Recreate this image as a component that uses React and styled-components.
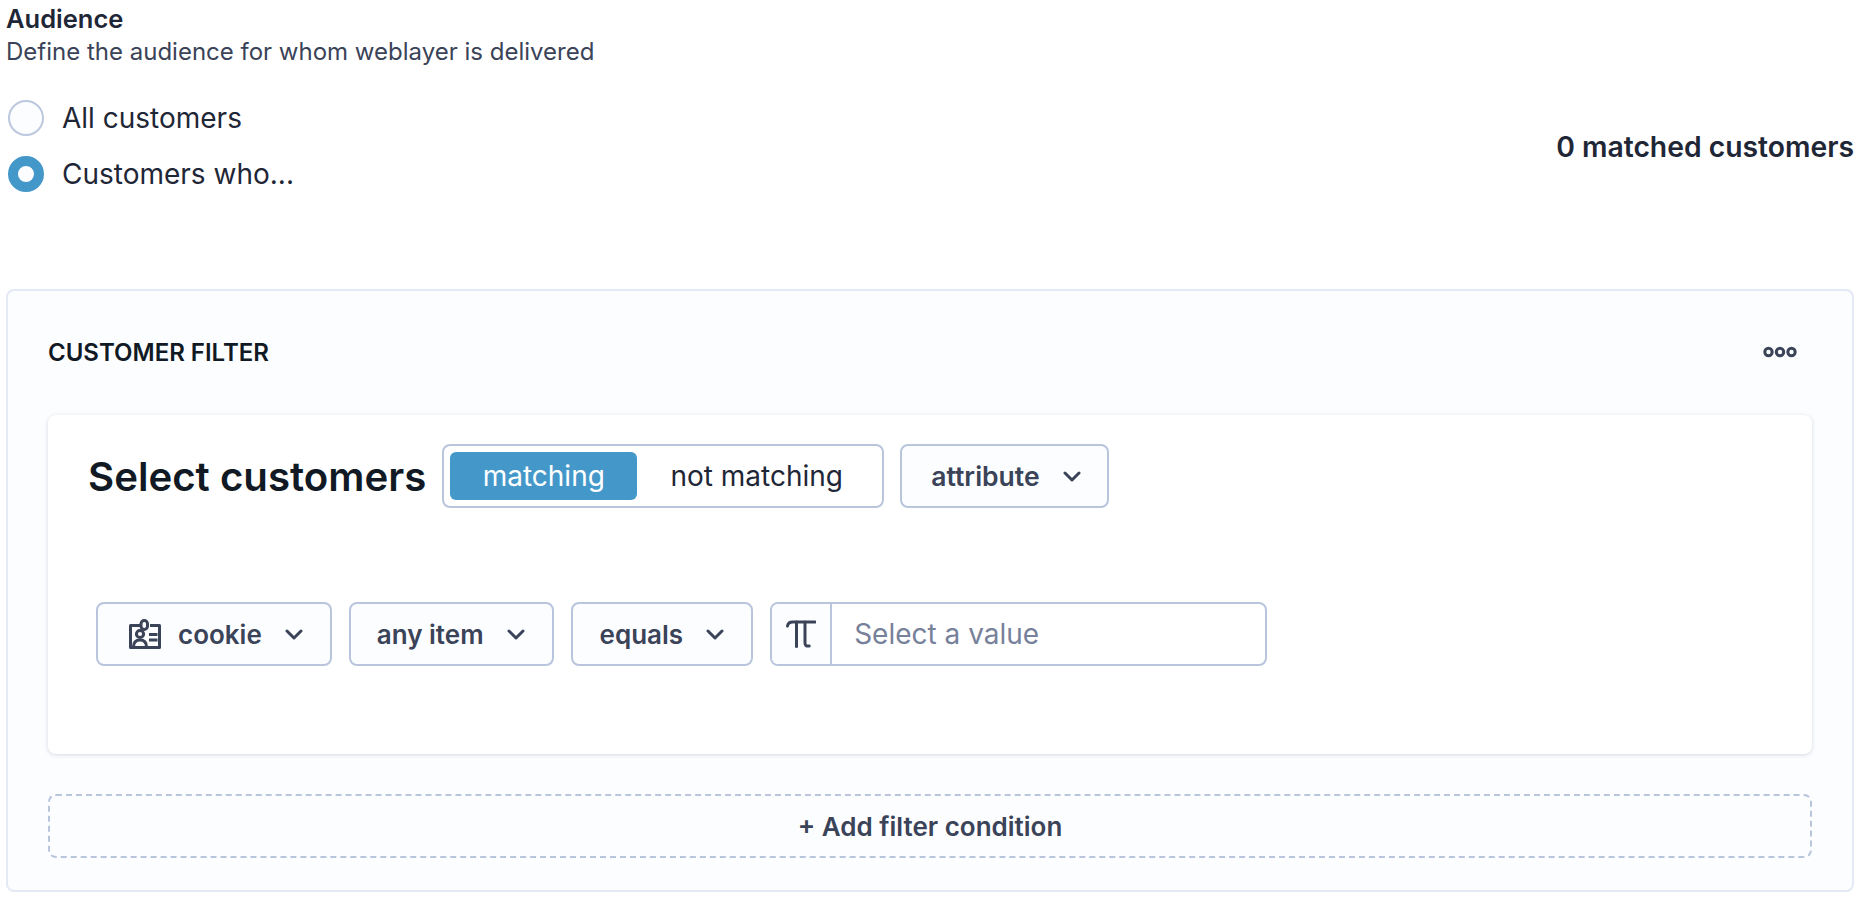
import styled, {createGlobalStyle} from "styled-components";

const GlobalStyle = createGlobalStyle`
  html, body {
    margin: 0;
    padding: 0;
    background: #fff;
    font-family: Inter, "Liberation Sans", sans-serif;
    color: #1f2937;
  }
  * {
    box-sizing: border-box;
  }
`;

const Page = styled.div`
  width: 1868px;
  height: 904px;
  padding: 5px 14px 0 6px;
  overflow: hidden;
`;

const Title = styled.h3`
  margin: 0;
  font-size: 25.5px;
  line-height: 27px;
  font-weight: 600;
  color: #1f2737;
`;

const Description = styled.p`
  margin: 6px 0 0;
  font-size: 24px;
  line-height: 27px;
  font-weight: 400;
  color: #3a4358;
`;

const AudienceRow = styled.div`
  display: flex;
  align-items: center;
  justify-content: space-between;
  margin-top: 35px;
`;

const Radios = styled.div`
  display: flex;
  flex-direction: column;
  gap: 20px;
  padding-left: 2px;
`;

const RadioRow = styled.label`
  display: flex;
  align-items: center;
  gap: 18px;
  height: 36px;
  font-size: 28px;
  color: #1f2737;
`;

const RadioDot = styled.span`
  width: 36px;
  height: 36px;
  border-radius: 50%;
  background: #fcfdff;
  border: ${(p) => (p.$checked ? "10px solid #4498c9" : "2px solid #bcc8de")};
`;

const Matched = styled.div`
  padding-top: 2px;
  font-size: 28.3px;
  font-weight: 600;
  color: #1f2737;
`;

const Panel = styled.section`
  margin-top: 97px;
  height: 603px;
  padding: 0 40px;
  border: 2px solid #e3e9f5;
  border-radius: 8px;
  background: #fcfdff;
`;

const PanelHead = styled.div`
  display: flex;
  align-items: center;
  justify-content: space-between;
  height: 124px;
  padding: 0 15px 2px 0;
  font-size: 24px;
  font-weight: 600;
  color: #111a24;
`;

const Card = styled.div`
  height: 339px;
  padding: 29px 40px 0;
  background: #fff;
  border-radius: 8px;
  box-shadow: 0 1px 4px rgba(60, 75, 110, 0.2);
`;

const CardHead = styled.div`
  display: flex;
  align-items: center;
  gap: 16px;
`;

const Heading = styled.h2`
  margin: 0;
  font-size: 40.2px;
  font-weight: 600;
  color: #111a24;
`;

const Toggle = styled.div`
  display: flex;
  width: 442px;
  height: 64px;
  padding: 6px;
  background: #fff;
  border: 2px solid #b9c5dc;
  border-radius: 8px;
`;

const ToggleOption = styled.div`
  display: flex;
  align-items: center;
  justify-content: center;
  flex: ${(p) => (p.$active ? "0 0 187px" : "1")};
  border-radius: 6px;
  font-size: 28px;
  color: ${(p) => (p.$active ? "#fff" : "#1f2737")};
  background: ${(p) => (p.$active ? "#4498c9" : "transparent")};
`;

const Conditions = styled.div`
  display: flex;
  gap: 17px;
  margin: 94px 0 0 8px;
`;

const Select = styled.button`
  display: flex;
  align-items: center;
  gap: 23px;
  height: 64px;
  padding: 0 ${(p) => p.$right || 27}px 0 ${(p) => p.$left || 27}px;
  background: #fcfdff;
  border: 2px solid #b9c5dc;
  border-radius: 8px;
  font-family: inherit;
  font-size: ${(p) => p.$size || 26}px;
  font-weight: 600;
  color: #3a4358;
`;

const SelectIcon = styled.span`
  display: flex;
  margin-right: -6px;
`;

const ValueField = styled.div`
  display: flex;
  width: 497px;
  height: 64px;
  background: #fff;
  border: 2px solid #b9c5dc;
  border-radius: 8px;
  overflow: hidden;
`;

const TypeBox = styled.div`
  display: flex;
  align-items: center;
  justify-content: center;
  width: 60px;
  background: #fcfdff;
  border-right: 2px solid #b9c5dc;
`;

const Placeholder = styled.div`
  display: flex;
  align-items: center;
  padding-left: 22px;
  font-size: 28px;
  color: #77819a;
`;

const AddCondition = styled.div`
  display: flex;
  align-items: center;
  justify-content: center;
  height: 64px;
  margin-top: 40px;
  border: 2px dashed #b9c5dc;
  border-radius: 8px;
  font-size: 26px;
  font-weight: 600;
  color: #3a4358;
`;

const Chevron = () => (
  <svg width="18" height="11" viewBox="0 0 18 11" fill="none" stroke="#3a4358" strokeWidth="3" strokeLinecap="round" strokeLinejoin="round">
    <path d="M2 2l7 7 7-7" />
  </svg>
);

const Dots = () => (
  <svg width="34" height="12" viewBox="0 0 34 12" fill="none" stroke="#3a4358" strokeWidth="3">
    <circle cx="5.5" cy="6" r="3.7" />
    <circle cx="17" cy="6" r="3.7" />
    <circle cx="28.5" cy="6" r="3.7" />
  </svg>
);

const IdCard = () => (
  <svg width="32" height="30" viewBox="0 0 32 30" fill="none" stroke="#3a4358" strokeWidth="3" strokeLinejoin="round">
    <path d="M11 6.5H1.5v22h29v-22H21" />
    <rect x="12" y="1.5" width="6.5" height="9" rx="3.2" />
    <circle cx="11" cy="15" r="3.6" />
    <path d="M4.5 28c0-5 2.5-7 6.5-7s6.5 2 6.5 7" />
    <path d="M20 15.5h8.5M20 21h8.5" strokeWidth="2.8" />
  </svg>
);

const TextType = () => (
  <svg width="30" height="28" viewBox="0 0 30 28" fill="none" stroke="#3a4358" strokeWidth="3" strokeLinecap="round">
    <path d="M1.5 6C2 3 3.5 2 6.5 2H29" />
    <path d="M10.5 2v24.5" />
    <path d="M19 2v21c0 2.4 1 3.4 4.2 3" />
  </svg>
);

export default function App() {
  return (
    <Page>
      <GlobalStyle />
      <Title>Audience</Title>
      <Description>Define the audience for whom weblayer is delivered</Description>
      <AudienceRow>
        <Radios>
          <RadioRow>
            <RadioDot />
            All customers
          </RadioRow>
          <RadioRow>
            <RadioDot $checked />
            Customers who...
          </RadioRow>
        </Radios>
        <Matched>0 matched customers</Matched>
      </AudienceRow>
      <Panel>
        <PanelHead>
          CUSTOMER FILTER
          <Dots />
        </PanelHead>
        <Card>
          <CardHead>
            <Heading>Select customers</Heading>
            <Toggle>
              <ToggleOption $active>matching</ToggleOption>
              <ToggleOption>not matching</ToggleOption>
            </Toggle>
            <Select $size={26.5} $left={29} $right={26}>
              attribute
              <Chevron />
            </Select>
          </CardHead>
          <Conditions>
            <Select $left={31} $right={27}>
              <SelectIcon>
                <IdCard />
              </SelectIcon>
              cookie
              <Chevron />
            </Select>
            <Select $left={26}>
              any item
              <Chevron />
            </Select>
            <Select>
              equals
              <Chevron />
            </Select>
            <ValueField>
              <TypeBox>
                <TextType />
              </TypeBox>
              <Placeholder>Select a value</Placeholder>
            </ValueField>
          </Conditions>
        </Card>
        <AddCondition>+ Add filter condition</AddCondition>
      </Panel>
    </Page>
  );
}
